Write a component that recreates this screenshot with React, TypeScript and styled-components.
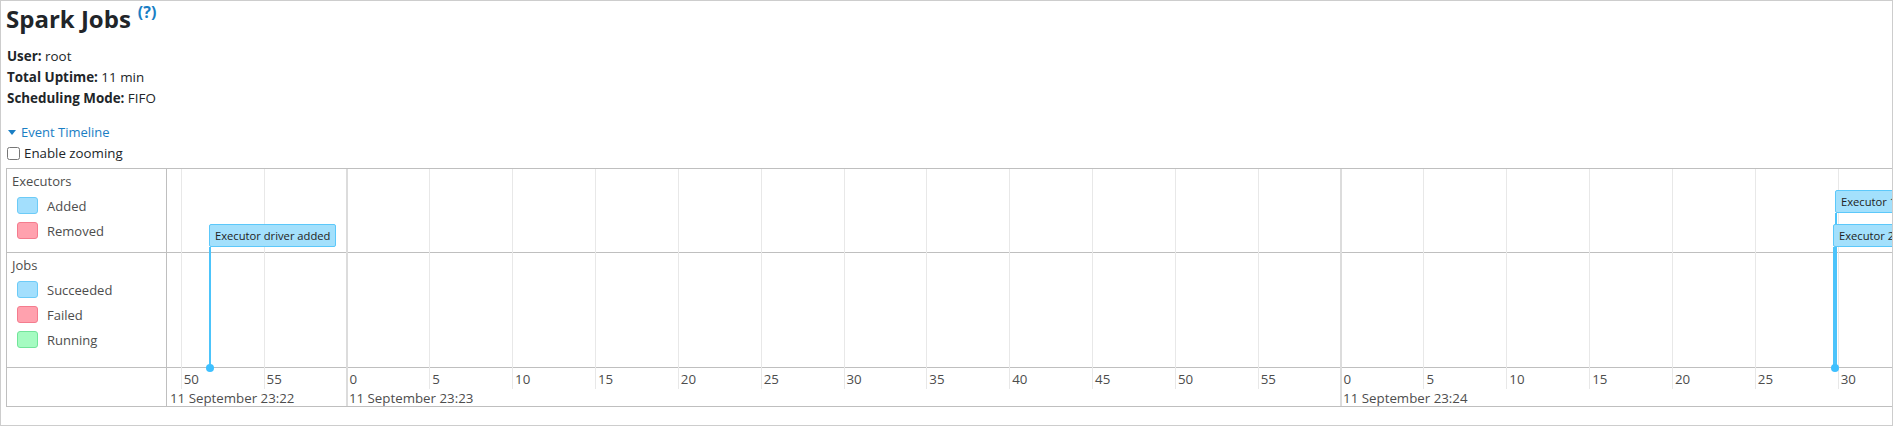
import React from "react";
import styled, { createGlobalStyle } from "styled-components";

const GlobalStyle = createGlobalStyle`
  html, body { margin: 0; padding: 0; background: #fff; }
  body {
    font-family: "Open Sans", "Noto Sans", sans-serif;
    color: #212529;
  }
`;

const PX_PER_SEC = 16.57;
const ORIGIN = 13.7; // x of 23:22:50 inside the chart
const xAt = (t: number) => ORIGIN + PX_PER_SEC * t;

const Frame = styled.div`
  box-sizing: border-box;
  width: 1893px;
  height: 426px;
  border: 1px solid #cdcdcd;
  overflow: hidden;
  padding: 0 0 0 5px;
`;

const Title = styled.h3`
  margin: 3px 0 0 0;
  font-size: 24px;
  line-height: 30px;
  font-weight: 700;
  color: #212529;
`;

const Help = styled.sup`
  font-size: 16px;
  font-weight: 700;
  color: #1a7ec4;
  margin-left: 7px;
  vertical-align: top;
  position: relative;
  top: -7px;
`;

const InfoList = styled.ul`
  list-style: none;
  margin: 12px 0 0 0;
  padding: 0 0 0 1px;
`;

const InfoItem = styled.li`
  font-size: 13.4px;
  line-height: 21px;
  color: #212529;
  strong { font-weight: 700; }
`;

const Toggle = styled.div`
  display: flex;
  align-items: center;
  gap: 5px;
  margin-top: 13px;
  padding-left: 2px;
  font-size: 13px;
  line-height: 21px;
  color: #1a7ec4;
`;

const Caret = styled.span`
  width: 0;
  height: 0;
  border-left: 4px solid transparent;
  border-right: 4px solid transparent;
  border-top: 5px solid #1a7ec4;
`;

const CheckRow = styled.label`
  display: flex;
  align-items: center;
  gap: 4px;
  padding-left: 1px;
  font-size: 13.3px;
  line-height: 21px;
  color: #212529;
  input {
    width: 13px;
    height: 13px;
    margin: 0;
  }
`;

const TimelineBox = styled.div`
  margin-top: 4px;
  width: 2000px;
  border: 1px solid #bfbfbf;
  display: grid;
  grid-template-columns: 160px 1fr;
`;

const LegendPanel = styled.div`
  border-right: 1px solid #bfbfbf;
  display: flex;
  flex-direction: column;
`;

const LegendGroup = styled.div<{ $h: number; $last?: boolean }>`
  box-sizing: border-box;
  height: ${(p) => p.$h + (p.$last ? 0 : 1)}px;
  border-bottom: ${(p) => (p.$last ? "none" : "1px solid #bfbfbf")};
  padding: 4px 0 0 5px;
`;

const LegendTitle = styled.div`
  font-size: 13px;
  line-height: 16px;
  color: #4d4d4d;
  margin-bottom: 4px;
`;

const LegendItem = styled.div`
  display: flex;
  align-items: center;
  height: 25px;
  padding-left: 5px;
  gap: 9px;
  font-size: 13px;
  color: #4d4d4d;
`;

const Swatch = styled.span<{ $fill: string; $stroke: string }>`
  box-sizing: border-box;
  width: 21px;
  height: 17px;
  border-radius: 3px;
  background: ${(p) => p.$fill};
  border: 1px solid ${(p) => p.$stroke};
`;

const Chart = styled.div`
  position: relative;
  display: flex;
  flex-direction: column;
  overflow: hidden;
`;

const Band = styled.div<{ $h: number; $last?: boolean }>`
  box-sizing: border-box;
  height: ${(p) => p.$h + (p.$last ? 0 : 1)}px;
  border-bottom: ${(p) => (p.$last ? "none" : "1px solid #bfbfbf")};
`;

const Grid = styled.div<{ $major?: boolean }>`
  position: absolute;
  top: 0;
  width: ${(p) => (p.$major ? 2 : 1)}px;
  height: ${(p) => (p.$major ? "100%" : "220px")};
  background: ${(p) => (p.$major ? "#dcdcdc" : "#e8e8e8")};
`;

const MinorLabel = styled.div`
  position: absolute;
  top: 202px;
  font-size: 13.3px;
  line-height: 16px;
  color: #4d4d4d;
  white-space: nowrap;
`;

const MajorLabel = styled(MinorLabel)`
  top: 222px;
  line-height: 14px;
`;

const Stem = styled.div`
  position: absolute;
  width: 2px;
  background: #4cc4fb;
`;

const Dot = styled.div`
  position: absolute;
  width: 8px;
  height: 8px;
  margin: -4px 0 0 -4px;
  border-radius: 50%;
  background: #3ec0ff;
`;

const ItemBox = styled.div`
  position: absolute;
  box-sizing: border-box;
  height: 23px;
  padding: 0 5px;
  background: #a3e0fc;
  border: 1px solid #5cc8fa;
  border-radius: 2px;
  font-size: 11.2px;
  line-height: 21px;
  color: #222;
  white-space: nowrap;
`;

const Plain = styled.span``;

type Tick = { t: number; x: number; label: string; major: boolean };

const ticks: Tick[] = [];
for (let t = -5; t <= 110; t += 5) {
  const x = xAt(t);
  if (x < 0) continue;
  const sec = (50 + t + 60) % 60;
  ticks.push({ t, x, label: String(sec), major: sec === 0 });
}

const majors = [
  { x: 3, label: "11 September 23:22" },
  { x: xAt(10) + 2.5, label: "11 September 23:23" },
  { x: xAt(70) + 2.5, label: "11 September 23:24" },
];

type EventItem = { x: number; boxTop: number; label: string };
const events: EventItem[] = [
  { x: 42, boxTop: 55, label: "Executor driver added" },
  { x: 1668, boxTop: 21, label: "Executor 1 added" },
  { x: 1666, boxTop: 55, label: "Executor 2 added" },
];

const DOT_Y = 198.5;

export default function App() {
  return (
    <>
      <GlobalStyle />
      <Frame>
        <Title>
          Spark Jobs<Help>(?)</Help>
        </Title>
        <InfoList>
          <InfoItem>
            <strong>User:</strong> root
          </InfoItem>
          <InfoItem>
            <strong>Total Uptime:</strong> 11 min
          </InfoItem>
          <InfoItem>
            <strong>Scheduling Mode:</strong> FIFO
          </InfoItem>
        </InfoList>
        <Toggle>
          <Caret />
          <Plain>Event Timeline</Plain>
        </Toggle>
        <CheckRow>
          <input type="checkbox" />
          Enable zooming
        </CheckRow>
        <TimelineBox>
          <LegendPanel>
            <LegendGroup $h={83}>
              <LegendTitle>Executors</LegendTitle>
              <LegendItem>
                <Swatch $fill="#a3dffd" $stroke="#6ccbf7" />
                Added
              </LegendItem>
              <LegendItem>
                <Swatch $fill="#ffa1ae" $stroke="#f47c8e" />
                Removed
              </LegendItem>
            </LegendGroup>
            <LegendGroup $h={114}>
              <LegendTitle>Jobs</LegendTitle>
              <LegendItem>
                <Swatch $fill="#a3dffd" $stroke="#6ccbf7" />
                Succeeded
              </LegendItem>
              <LegendItem>
                <Swatch $fill="#ffa1ae" $stroke="#f47c8e" />
                Failed
              </LegendItem>
              <LegendItem>
                <Swatch $fill="#a5fbc1" $stroke="#72e49a" />
                Running
              </LegendItem>
            </LegendGroup>
            <LegendGroup $h={38} $last />
          </LegendPanel>
          <Chart>
            {ticks.map((tk) => (
              <Grid
                key={`g${tk.t}`}
                $major={tk.major}
                style={{ left: tk.major ? tk.x - 0.5 : tk.x }}
              />
            ))}
            <Band $h={83} />
            <Band $h={114} />
            <Band $h={38} $last />
            {ticks.map((tk) => (
              <MinorLabel key={`l${tk.t}`} style={{ left: tk.x + 3 }}>
                {tk.label}
              </MinorLabel>
            ))}
            {majors.map((m) => (
              <MajorLabel key={m.label} style={{ left: m.x }}>
                {m.label}
              </MajorLabel>
            ))}
            {events.map((ev) => (
              <React.Fragment key={ev.label}>
                <Stem
                  style={{
                    left: ev.x,
                    top: ev.boxTop + 23,
                    height: DOT_Y - ev.boxTop - 23,
                  }}
                />
                <ItemBox style={{ left: ev.x, top: ev.boxTop }}>{ev.label}</ItemBox>
              </React.Fragment>
            ))}
            <Dot style={{ left: 43, top: DOT_Y }} />
            <Dot style={{ left: 1668, top: DOT_Y }} />
          </Chart>
        </TimelineBox>
      </Frame>
    </>
  );
}
